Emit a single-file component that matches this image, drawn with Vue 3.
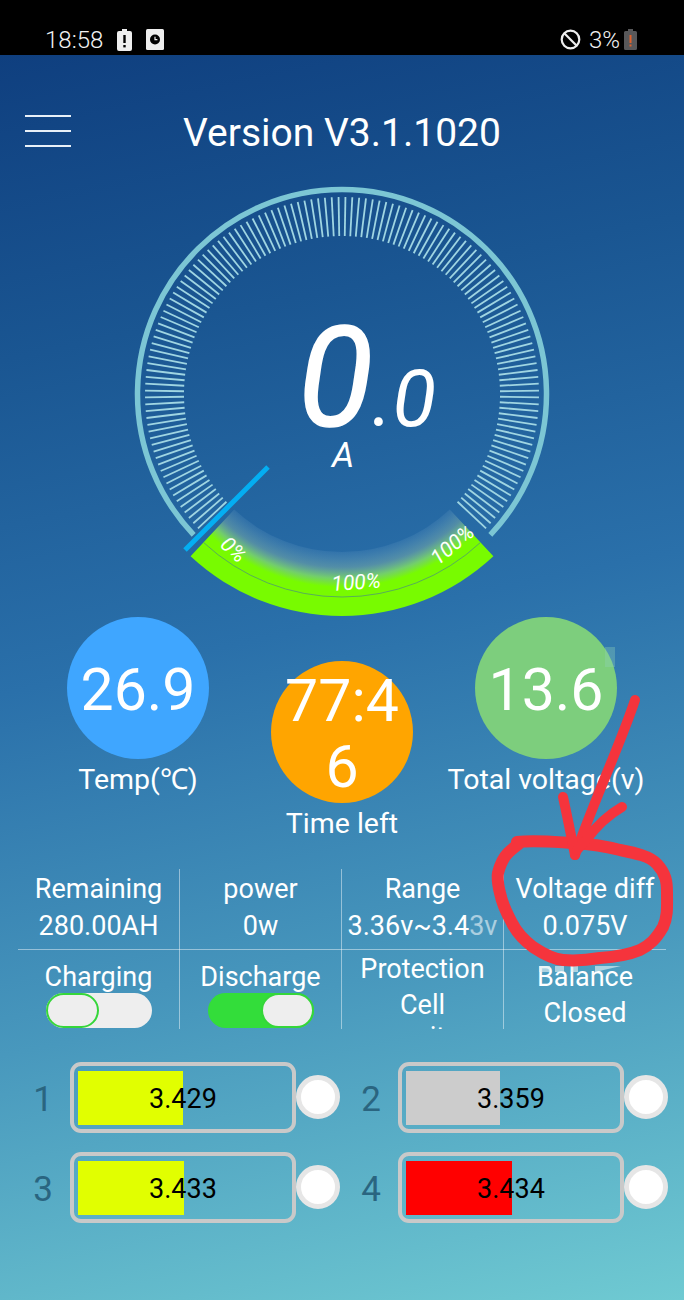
<script setup>
import { computed } from 'vue'

// gauge centre, in the page coordinates the svg viewBox uses
const cx = 342
const cy = 394

function polar(r, deg) {
  const a = ((deg - 90) * Math.PI) / 180
  return [cx + r * Math.cos(a), cy + r * Math.sin(a)]
}

const ticks = computed(() => {
  const list = []
  for (let d = -133; d <= 133; d += 2) {
    const [x1, y1] = polar(158, d)
    const [x2, y2] = polar(197, d)
    list.push({ x1, y1, x2, y2 })
  }
  return list
})

function arc(r, from, to) {
  const [x1, y1] = polar(r, from)
  const [x2, y2] = polar(r, to)
  const large = to - from > 180 ? 1 : 0
  return `M${x1} ${y1}A${r} ${r} 0 ${large} 1 ${x2} ${y2}`
}

const ring = arc(204.5, -133.5, 133.5)
const thinLine = arc(203, 137, 223)

const wedge = computed(() => {
  const [a, b] = polar(222, 137)
  const [c, d] = polar(222, 223)
  const [e, f] = polar(158, 223)
  const [g, h] = polar(158, 137)
  return `M${a} ${b}A222 222 0 0 1 ${c} ${d}L${e} ${f}A158 158 0 0 0 ${g} ${h}Z`
})

const stats = [
  { value: '26.9', label: 'Temp(℃)', color: '#3fa6ff' },
  { value: '77:46', label: 'Time left', color: '#ffa500', low: true },
  { value: '13.6', label: 'Total voltage(v)', color: '#7dce7d' },
]

const cells = [
  { id: 1, value: '3.429', width: 105, color: '#e1ff00' },
  { id: 2, value: '3.359', width: 94, color: '#cccccc' },
  { id: 3, value: '3.433', width: 106, color: '#e1ff00' },
  { id: 4, value: '3.434', width: 106, color: '#ff0000' },
]
</script>

<template>
  <div class="phone">
    <div class="statusbar">
      <div class="status-left">
        <span class="time">18:58</span>
        <svg class="ico-batt" width="15" height="22" viewBox="0 0 15 22">
          <path d="M5 0h5v2h3a2 2 0 0 1 2 2v16a2 2 0 0 1-2 2H2a2 2 0 0 1-2-2V4a2 2 0 0 1 2-2h3z" fill="#eee" />
          <rect x="6.3" y="6" width="2.4" height="8" fill="#000" />
          <rect x="6.3" y="16" width="2.4" height="2.4" fill="#000" />
        </svg>
        <svg class="ico-clock" width="18" height="21" viewBox="0 0 18 21">
          <rect width="18" height="21" rx="1.5" fill="#eee" />
          <circle cx="9" cy="10.5" r="5" fill="#000" />
          <path d="M9 7.8v2.9h2.4" stroke="#eee" stroke-width="1.2" fill="none" />
        </svg>
      </div>
      <div class="status-right">
        <svg width="21" height="21" viewBox="0 0 21 21">
          <circle cx="10.5" cy="10.5" r="8.8" fill="none" stroke="#eee" stroke-width="2.2" />
          <path d="M4.3 4.3l12.4 12.4" stroke="#eee" stroke-width="2.2" />
        </svg>
        <span class="pct">3%</span>
        <svg width="13" height="21" viewBox="0 0 13 21">
          <path d="M4 0h5v2h2.500a1.500 1.500 0 0 1 1.500 1.500v16a1.500 1.500 0 0 1-1.500 1.500h-10a1.500 1.500 0 0 1-1.500-1.500v-16a1.500 1.500 0 0 1 1.500-1.500h2.500z" fill="#58585a" />
          <rect x="5.500" y="6" width="2" height="8" fill="#e0622c" />
          <rect x="5.500" y="15.500" width="2" height="2" fill="#e0622c" />
        </svg>
      </div>
    </div>

    <div class="screen">
      <header class="topbar">
        <div class="menu"><i></i><i></i><i></i></div>
        <h1 class="title">Version V3.1.1020</h1>
      </header>

      <svg class="gauge" width="460" height="437" viewBox="112 180 460 437">
        <defs>
          <radialGradient id="greenFade" gradientUnits="userSpaceOnUse" :cx="cx" :cy="cy" r="222">
            <stop offset="0.712" stop-color="#7fb0d0" stop-opacity="0.14" />
            <stop offset="0.78" stop-color="#88b8a8" stop-opacity="0.45" />
            <stop offset="0.83" stop-color="#80e060" stop-opacity="0.85" />
            <stop offset="0.87" stop-color="#78fb00" />
            <stop offset="1" stop-color="#78fb00" />
          </radialGradient>
        </defs>
        <path :d="ring" fill="none" stroke="#7cc6d4" stroke-width="5.500" />
        <line
          v-for="(t, i) in ticks"
          :key="i"
          :x1="t.x1"
          :y1="t.y1"
          :x2="t.x2"
          :y2="t.y2"
          stroke="#9fd5e2"
          stroke-width="1.800"
        />
        <path :d="wedge" fill="url(#greenFade)" />
        <path :d="thinLine" fill="none" stroke="#4f9a70" stroke-width="0.800" />
        <line x1="185" y1="550" x2="268" y2="467" stroke="#04aef2" stroke-width="5" />

        <text class="g-big" x="298" y="426">0</text>
        <text class="g-mid" x="372" y="426">.0</text>
        <text class="g-unit" x="343" y="467" text-anchor="middle">A</text>
        <text class="g-pct" transform="translate(219 546) rotate(42)">0%</text>
        <text class="g-pct" transform="translate(332 591) rotate(-4)">100%</text>
        <text class="g-pct" transform="translate(438 566) rotate(-40)">100%</text>
      </svg>

      <section class="stats">
        <div v-for="s in stats" :key="s.label" class="stat" :class="{ low: s.low }">
          <div class="bubble" :style="{ background: s.color }"><span>{{ s.value }}</span></div>
          <div class="stat-label">{{ s.label }}</div>
        </div>
      </section>

      <section class="info">
        <div class="cell top"><div>Remaining</div><div>280.00AH</div></div>
        <div class="cell top"><div>power</div><div>0w</div></div>
        <div class="cell top nowrap"><div>Range</div><div>3.36v~3.4<span class="dim">3v</span></div></div>
        <div class="cell top last"><div>Voltage diff</div><div>0.075V</div></div>

        <div class="cell bottom">
          <div>Charging</div>
          <div class="toggle"><span class="knob"></span></div>
        </div>
        <div class="cell bottom">
          <div>Discharge</div>
          <div class="toggle on"><span class="knob"></span></div>
        </div>
        <div class="cell bottom tight"><div>Protection</div><div>Cell</div><div class="cut">unit</div></div>
        <div class="cell bottom last"><div>Balance</div><div>Closed</div></div>
      </section>

      <section class="cells">
        <div v-for="c in cells" :key="c.id" class="cell-row">
          <span class="cell-no">{{ c.id }}</span>
          <div class="battery">
            <div class="fill" :style="{ width: c.width + 'px', background: c.color }"></div>
            <span class="volt">{{ c.value }}</span>
          </div>
          <span class="dot"></span>
        </div>
      </section>
    </div>

    <!-- hand drawn mark on top of the screenshot -->
    <svg class="scribble" width="684" height="1300" viewBox="0 0 684 1300">
      <rect x="605" y="647" width="10" height="20" fill="#8fd0b8" opacity="0.35" />
      <g fill="#dff0f4" opacity="0.65">
        <rect x="539" y="966" width="11" height="6" />
        <rect x="555" y="966" width="9" height="6" />
        <rect x="571" y="966" width="7" height="6" />
        <path d="M595 966h26l-26 6z" />
      </g>
      <g fill="none" stroke="#f5343c" stroke-linecap="round" stroke-linejoin="round">
        <path stroke-width="12" d="M517 842C535 840 555 842 573 843C590 844 605 846 620 850C635 853 650 856 657 864C666 874 667 882 667 892C667 905 668 917 663 927C656 939 650 945 640 950C628 955 615 957 600 958C588 960 575 961 563 960C552 959 542 953 533 947C525 941 517 933 512 923C506 912 502 903 500 893C498 885 497 879 498 873C500 865 503 858 508 853C512 849 516 846 520 843" />
        <path stroke-width="10" d="M635 700C625 730 610 765 598 795C590 815 582 835 575 855" />
        <path stroke-width="10" d="M563 797C567 815 571 835 575 855" />
        <path stroke-width="10" d="M622 807C608 815 595 828 586 840L577 850" />
      </g>
    </svg>
  </div>
</template>

<style>
html,
body {
  margin: 0;
  background: #000;
}
</style>

<style scoped>
.phone {
  position: relative;
  width: 684px;
  height: 1300px;
  overflow: hidden;
  font-family: Roboto, "Liberation Sans", sans-serif;
  color: #fff;
}

.statusbar {
  height: 55px;
  background: #000;
  color: #f2f2f2;
  display: flex;
  justify-content: space-between;
  align-items: center;
  padding: 24px 47px 0 45px;
  box-sizing: border-box;
  font-size: 24px;
}
.status-left,
.status-right {
  display: flex;
  align-items: center;
}
.status-left svg,
.status-right svg {
  display: block;
}
.time {
  font-weight: 300;
}
.ico-batt {
  margin-left: 14px;
}
.ico-clock {
  margin-left: 14px;
}
.pct {
  font-weight: 300;
  margin: 0 4px 0 8px;
}

.screen {
  height: 1245px;
  background: linear-gradient(168deg, #0f3f7f 0%, #1a5692 22%, #2a70aa 46%, #4898bd 72%, #6fcad2 100%);
  overflow: hidden;
}

.topbar {
  position: relative;
  height: 125px;
}
.menu {
  position: absolute;
  left: 25px;
  top: 60px;
  width: 46px;
  display: flex;
  flex-direction: column;
  gap: 13px;
}
.menu i {
  display: block;
  height: 2px;
  background: #e8f0f8;
}
.title {
  margin: 0;
  padding-top: 54px;
  text-align: center;
  font-size: 39px;
  line-height: 48px;
  font-weight: 400;
}

.gauge {
  display: block;
  margin: 0 auto;
}
.gauge text {
  fill: #fff;
  font-family: Roboto, "Liberation Sans", sans-serif;
  font-style: italic;
}
.gauge .g-big {
  font-size: 138px;
  stroke: #fff;
  stroke-width: 1.500px;
}
.gauge .g-mid {
  font-size: 80px;
}
.g-unit {
  font-size: 35px;
}
.g-pct {
  font-size: 21px;
}

.stats {
  display: flex;
  padding: 0 36px;
  margin-bottom: 27px;
}
.stat {
  width: 204px;
  display: flex;
  flex-direction: column;
  align-items: center;
}
.stat.low {
  padding-top: 44px;
}
.bubble {
  width: 142px;
  height: 142px;
  padding-top: 4px;
  box-sizing: border-box;
  border-radius: 50%;
  display: flex;
  align-items: center;
  justify-content: center;
  text-align: center;
  font-size: 59px;
  line-height: 66px;
  word-break: break-all;
}
.bubble span {
  width: 122px;
}
.stat-label {
  margin-top: 3px;
  font-size: 28.500px;
  line-height: 36px;
  white-space: nowrap;
}

.info {
  margin-left: 18px;
  width: 649px;
  display: grid;
  grid-template-columns: repeat(4, 162px);
  grid-auto-rows: 80px;
  font-size: 27px;
  line-height: 36px;
  text-align: center;
}
.cell {
  border-right: 1px solid rgba(255, 255, 255, 0.45);
  overflow: hidden;
}
.cell.last {
  border-right: none;
}
.cell.top {
  padding-top: 2px;
  height: 81px;
  line-height: 37px;
  box-sizing: border-box;
  border-bottom: 1px solid rgba(255, 255, 255, 0.45);
}
.cell.nowrap {
  white-space: nowrap;
}
.dim {
  opacity: 0.55;
}
.cell.bottom {
  padding-top: 10px;
  height: 80px;
  box-sizing: border-box;
}
.cell.bottom.tight {
  padding-top: 2px;
}
.cut {
  margin-top: -4px;
}

.toggle {
  width: 106px;
  height: 35px;
  margin: -2px auto 0;
  border-radius: 18px;
  background: #eeeeee;
  box-sizing: border-box;
  display: flex;
}
.knob {
  width: 53px;
  height: 35px;
  border: 2px solid #35d63a;
  border-radius: 18px;
  background: #eeeeee;
  box-sizing: border-box;
}
.toggle.on {
  background: #33dd3a;
  justify-content: flex-end;
}

.cells {
  margin-top: 33px;
  padding-left: 24px;
  display: grid;
  grid-template-columns: 328px 328px;
  row-gap: 19px;
}
.cell-row {
  display: flex;
  align-items: center;
}
.cell-no {
  width: 38px;
  margin-right: 8px;
  text-align: center;
  font-size: 35px;
  color: #2a6580;
  padding-top: 3px;
}
.battery {
  position: relative;
  width: 226px;
  height: 71px;
  box-sizing: border-box;
  border: 4.500px solid #c9c9c9;
  border-radius: 11px;
  padding: 4.500px 4px;
}
.fill {
  height: 54px;
}
.volt {
  position: absolute;
  inset: 3px 0 0;
  display: flex;
  align-items: center;
  justify-content: center;
  font-size: 27px;
  color: #000;
}
.dot {
  width: 44px;
  height: 44px;
  margin-top: -1px;
  box-sizing: border-box;
  border-radius: 50%;
  background: #fff;
  border: 5px solid #e6e6e6;
}

.scribble {
  position: absolute;
  left: 0;
  top: 0;
  pointer-events: none;
}
</style>
